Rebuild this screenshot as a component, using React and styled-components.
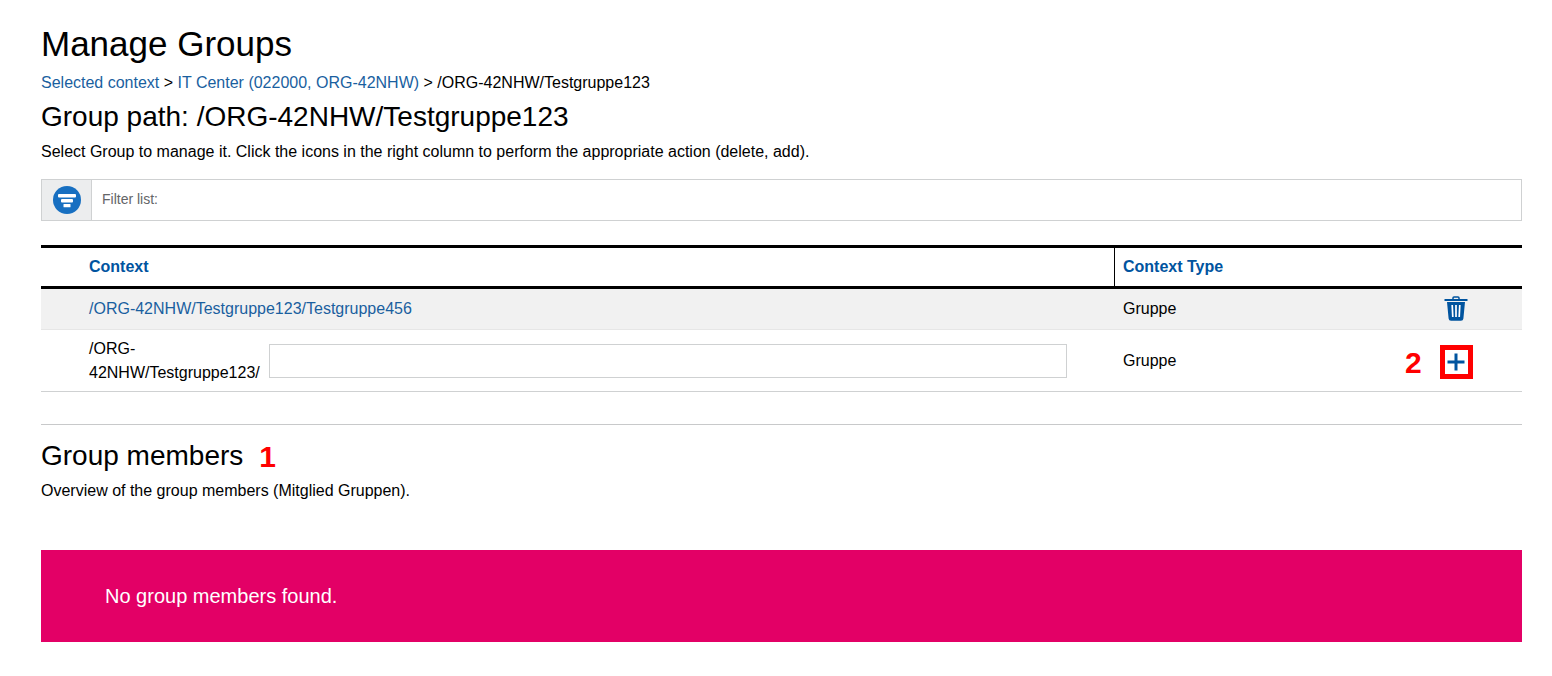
import React from "react";
import styled, { createGlobalStyle } from "styled-components";

const Global = createGlobalStyle`
  html, body { margin: 0; padding: 0; background: #fff; }
  body { font-family: "Liberation Sans", Arial, sans-serif; color: #000; }
`;
const Page = styled.main`
  padding: 24px 30px 34px 41px;
  display: flex;
  flex-direction: column;
`;
const Title = styled.h1`
  margin: 0;
  font-size: 35px;
  line-height: 40px;
  font-weight: 400;
`;
const Breadcrumb = styled.nav`
  margin-top: 9px;
  font-size: 16px;
  line-height: 20px;
`;
const Crumb = styled.a`
  color: #1a5f9f;
  text-decoration: none;
`;
const Heading = styled.h2`
  margin: ${(p) => p.$top}px 0 0;
  font-size: 28px;
  line-height: 32px;
  font-weight: 400;
  display: flex;
  align-items: center;
  gap: 16px;
`;
const Description = styled.p`
  margin: ${(p) => p.$top}px 0 0;
  font-size: 16px;
  line-height: 20px;
`;
const FilterBar = styled.div`
  margin-top: 17px;
  height: 42px;
  box-sizing: border-box;
  border: 1px solid #cfd1d2;
  display: flex;
  align-items: stretch;
`;
const FilterIconCell = styled.div`
  width: 50px;
  box-sizing: border-box;
  background: #ecedee;
  border-right: 1px solid #cfd1d2;
  display: flex;
  align-items: center;
  justify-content: center;
`;
const FilterLabel = styled.label`
  padding-left: 10px;
  padding-bottom: 2px;
  font-size: 14px;
  color: #646567;
  display: flex;
  align-items: center;
`;
const Table = styled.div`
  margin-top: 24px;
  display: flex;
  flex-direction: column;
`;
const HeaderRow = styled.div`
  display: grid;
  grid-template-columns: 1073px 1fr;
  height: 44px;
  box-sizing: border-box;
  border-top: 3px solid #000;
  border-bottom: 3px solid #000;
`;
const HeaderCell = styled.div`
  display: flex;
  align-items: center;
  font-size: 16px;
  font-weight: 700;
  color: #00549f;
  padding-left: ${(p) => p.$pad}px;
  border-left: ${(p) => (p.$divider ? "1px solid #000" : "none")};
`;
const Row = styled.div`
  display: grid;
  grid-template-columns: 1073px 1fr 122px;
  height: ${(p) => p.$height}px;
  box-sizing: border-box;
  background: ${(p) => p.$bg || "#fff"};
  border-bottom: 1px solid ${(p) => p.$line};
  font-size: 16px;
`;
const ContextCell = styled.div`
  padding-left: 48px;
  display: flex;
  align-items: center;
`;
const PathLabel = styled.span`
  width: 180px;
  line-height: 24px;
  flex: none;
`;
const NameInput = styled.input`
  width: 798px;
  height: 34px;
  box-sizing: border-box;
  border: 1px solid #cfd1d2;
  background: #fff;
  outline: none;
  padding: 0 8px;
`;
const TypeCell = styled.div`
  padding-left: 9px;
  display: flex;
  align-items: center;
`;
const ActionCell = styled.div`
  padding-left: 44px;
  display: flex;
  align-items: center;
`;
const AddCell = styled.div`
  margin-left: -39px;
  padding-top: 2px;
  display: flex;
  align-items: center;
  gap: 18px;
`;
const Marker = styled.span`
  color: #ff0000;
  font-weight: 700;
  font-size: 30px;
  line-height: 30px;
  padding-top: 2px;
`;
const AddButton = styled.button`
  width: 33px;
  height: 34px;
  box-sizing: border-box;
  border: 5px solid #ff0000;
  background: #fff;
  padding: 0;
  display: flex;
  align-items: center;
  justify-content: center;
`;
const Rule = styled.hr`
  margin: 32px 0 0;
  border: 0;
  border-top: 1px solid #c8c9ca;
`;
const Banner = styled.div`
  margin-top: 49px;
  height: 92px;
  background: #e30066;
  color: #fff;
  font-size: 20px;
  display: flex;
  align-items: center;
  padding-left: 64px;
`;

const FilterIcon = () => (
  <svg width="28" height="28" viewBox="0 0 28 28">
    <circle cx="14" cy="14" r="14" fill="#176fc1" />
    <rect x="5" y="8" width="18" height="3.4" rx="1" fill="#fff" />
    <rect x="8" y="13" width="12" height="3.4" rx="1" fill="#fff" />
    <rect x="10.5" y="18" width="7" height="3.2" rx="0.5" fill="#fff" />
  </svg>
);
const TrashIcon = () => (
  <svg width="24" height="26" viewBox="0 0 24 26" fill="none">
    <path d="M0.5 4h23" stroke="#00549f" strokeWidth="2" />
    <path d="M9 3.5V2a1 1 0 0 1 1-1h4a1 1 0 0 1 1 1v1.5" stroke="#00549f" strokeWidth="1.5" />
    <path d="M3 6h18l-1.6 16.5a2.5 2.5 0 0 1-2.5 2.3H7.1a2.5 2.5 0 0 1-2.5-2.3Z" fill="#00549f" />
    <path d="M8.2 9l.6 12M12 9v12M15.8 9l-.6 12" stroke="#fff" strokeWidth="1.7" />
  </svg>
);
const PlusIcon = () => (
  <svg width="18" height="18" viewBox="0 0 18 18">
    <path d="M0.5 9h17M9 0.5v17" stroke="#00549f" strokeWidth="3" />
  </svg>
);

export default function App() {
  return (
    <>
      <Global />
      <Page>
        <Title>Manage Groups</Title>
        <Breadcrumb>
          <Crumb href="#">Selected context</Crumb> &gt; <Crumb href="#">IT Center (022000, ORG-42NHW)</Crumb> &gt; /ORG-42NHW/Testgruppe123
        </Breadcrumb>
        <Heading $top={8}>Group path: /ORG-42NHW/Testgruppe123</Heading>
        <Description $top={9}>
          Select Group to manage it. Click the icons in the right column to perform the appropriate action (delete, add).
        </Description>
        <FilterBar>
          <FilterIconCell><FilterIcon /></FilterIconCell>
          <FilterLabel>Filter list:</FilterLabel>
        </FilterBar>
        <Table>
          <HeaderRow>
            <HeaderCell $pad={48}>Context</HeaderCell>
            <HeaderCell $pad={8} $divider>Context Type</HeaderCell>
          </HeaderRow>
          <Row $height={41} $bg="#f1f1f1" $line="#e6e6e6">
            <ContextCell><Crumb href="#">/ORG-42NHW/Testgruppe123/Testgruppe456</Crumb></ContextCell>
            <TypeCell>Gruppe</TypeCell>
            <ActionCell><TrashIcon /></ActionCell>
          </Row>
          <Row $height={62} $line="#cfd1d2">
            <ContextCell>
              <PathLabel>/ORG-42NHW/Testgruppe123/</PathLabel>
              <NameInput aria-label="Group name" />
            </ContextCell>
            <TypeCell>Gruppe</TypeCell>
            <ActionCell>
              <AddCell>
                <Marker>2</Marker>
                <AddButton aria-label="Add"><PlusIcon /></AddButton>
              </AddCell>
            </ActionCell>
          </Row>
        </Table>
        <Rule />
        <Heading $top={15}>Group members <Marker>1</Marker></Heading>
        <Description $top={9}>Overview of the group members (Mitglied Gruppen).</Description>
        <Banner>No group members found.</Banner>
      </Page>
    </>
  );
}
